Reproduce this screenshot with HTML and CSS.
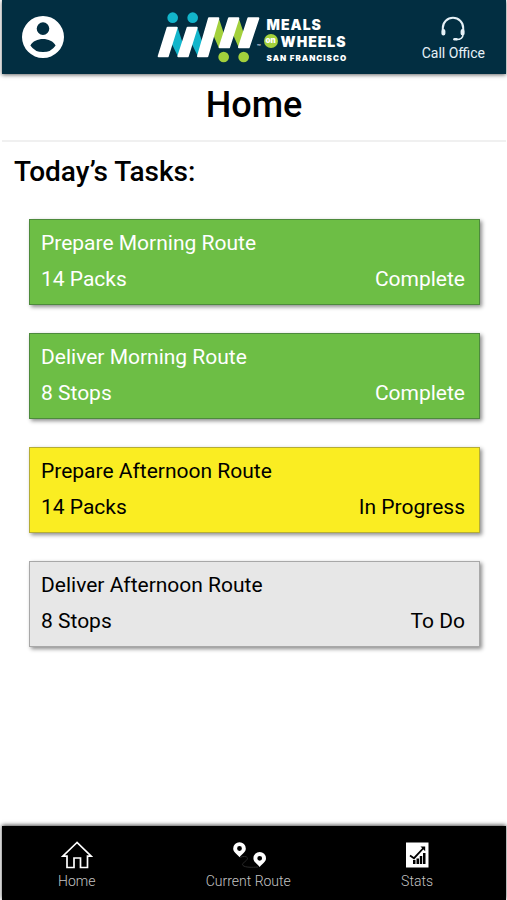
FILE: index.html
```html
<!DOCTYPE html>
<html lang="en">
<head>
<meta charset="utf-8">
<meta name="viewport" content="width=device-width, initial-scale=1">
<title>Home</title>
<link rel="stylesheet" href="styles.css">
</head>
<body>
<div class="app">
  <header class="topbar">
    <button class="profile" type="button" aria-label="Profile">
      <svg viewBox="2 2 20 20" width="42" height="42" aria-hidden="true"><path fill="#fff" d="M12 2a10 10 0 1 0 0 20 10 10 0 0 0 0-20zm0 3a3 3 0 1 1 0 6 3 3 0 0 1 0-6zm0 14.200a7.200 7.200 0 0 1-6-3.200c1-1.900 3.500-3 6-3s5 1.100 6 3a7.200 7.200 0 0 1-6 3.200z"/></svg>
    </button>
    <div class="brand">
      <svg viewBox="18 18 312 156" width="104" height="52" aria-hidden="true">
        <g fill="#12b5cb">
          <circle cx="65" cy="38" r="16"/><circle cx="125" cy="38" r="16"/>
          <path d="M79 65 97 120 82 157 60 112zM138 65 157 120 142 157 120 112z"/>
        </g>
        <g fill="#a2d03c">
          <circle cx="218" cy="156" r="16"/><circle cx="278" cy="156" r="16"/>
          <path d="M203 38 220 90 204 130 184 84zM263 38 280 90 264 130 244 84z"/>
        </g>
        <g fill="#fff" stroke="#fff" stroke-width="6" stroke-linejoin="round">
          <path d="M50 68H77L50 154H23zM110 68H137L110 154H82zM174 40H202L169 154H141zM234 40H262L234 127H206zM292 40H322L293 127H264z"/>
        </g>
      </svg>
      <span class="mark">™</span>
      <div class="wordmark">
        <span class="word">MEALS</span>
        <span class="word"><span class="on">on</span>WHEELS</span>
        <span class="city">SAN FRANCISCO</span>
      </div>
    </div>
    <button class="call" type="button">
      <svg viewBox="0 0 26 26" width="26" height="26" fill="none" stroke="#e6f1f7" stroke-linecap="round" aria-hidden="true">
        <path stroke-width="2" d="M2.800 14V12a10.200 10.200 0 0 1 20.400 0v2"/>
        <path stroke-width="4" d="M3.400 15v2.400M22.600 15v2.400"/>
        <path stroke-width="1.500" d="M23 18.500c0 3-2.500 5-6.500 5"/>
        <path stroke-width="2.600" d="M14.500 23.200h2"/>
      </svg>
      <span>Call Office</span>
    </button>
  </header>

  <main class="content">
    <h1 class="title">Home</h1>
    <section class="tasks">
      <h2 class="heading">Today’s Tasks:</h2>
      <ul class="list">
        <li class="card done"><span class="name">Prepare Morning Route</span><span class="detail"><span>14 Packs</span><span>Complete</span></span></li>
        <li class="card done"><span class="name">Deliver Morning Route</span><span class="detail"><span>8 Stops</span><span>Complete</span></span></li>
        <li class="card active"><span class="name">Prepare Afternoon Route</span><span class="detail"><span>14 Packs</span><span>In Progress</span></span></li>
        <li class="card todo"><span class="name">Deliver Afternoon Route</span><span class="detail"><span>8 Stops</span><span>To Do</span></span></li>
      </ul>
    </section>
  </main>

  <nav class="tabs">
    <a class="tab" href="#home">
      <svg viewBox="0 0 32 28" width="32" height="28" fill="none" stroke="#fff" stroke-width="1.700" aria-hidden="true"><path d="M16 1.500 1.800 15.200H6V26.500H13V17H19.500V26.500H26.500V15.200H30.200z"/></svg>
      <span>Home</span>
    </a>
    <a class="tab" href="#route">
      <svg viewBox="-2 0 36 28" width="36" height="28" aria-hidden="true">
        <path fill="none" stroke="#2a2a2a" stroke-width="1" d="M8 16.500c4-2 9-1 7 2s-6 4-4 6 9 2 15 1.500"/>
        <path fill="#fff" fill-rule="evenodd" d="M7.500 1.200a6.300 6.300 0 0 0-6.300 6.300c0 4 3.800 5.300 6.300 8.700 2.500-3.400 6.300-4.700 6.300-8.700a6.300 6.300 0 0 0-6.300-6.300zm0 3.900a2.400 2.400 0 1 1 0 4.800 2.400 2.400 0 0 1 0-4.800zM27.700 11a6.300 6.300 0 0 0-6.300 6.300c0 4 3.800 5.300 6.300 8.700 2.500-3.400 6.300-4.700 6.300-8.700a6.300 6.300 0 0 0-6.300-6.300zm0 3.900a2.400 2.400 0 1 1 0 4.800 2.400 2.400 0 0 1 0-4.800z"/>
      </svg>
      <span>Current Route</span>
    </a>
    <a class="tab" href="#stats">
      <svg viewBox="0 0 24 28" width="24" height="28" aria-hidden="true">
        <path fill="#fff" d="M1 1.500h22.500v25H1z"/>
        <path d="M8 19h2.500v4H8zM11.500 17.500H14V23h-2.500zM14.800 15h2.400v8h-2.400zM18 12h2.500v11H18z"/>
        <path fill="none" stroke="#000" stroke-width="1.800" d="M5 14.500 9 17.200 18.500 7"/>
        <path d="M15.500 5.500h4.700v4.700z"/>
      </svg>
      <span>Stats</span>
    </a>
  </nav>
</div>
</body>
</html>
```
FILE: styles.css
```css
* { box-sizing: border-box; }
body {
  margin: 0;
  background: #fff;
  color: #000;
  font-family: Roboto, "Liberation Sans", sans-serif;
}
button {
  margin: 0;
  padding: 0;
  border: 0;
  background: none;
  color: inherit;
  font: inherit;
  cursor: pointer;
}
svg { display: block; flex: none; }
.app {
  display: flex;
  flex-direction: column;
  min-height: 100vh;
  padding: 0 1px 0 2px;
}
.topbar {
  display: flex;
  align-items: center;
  justify-content: space-between;
  height: 74px;
  padding: 0 21px 0 20px;
  background: #022e41;
  color: #fff;
  box-shadow: 0 1px 4px rgba(0, 0, 0, 0.6);
}
.brand {
  display: flex;
  align-items: center;
  margin-left: 18px;
}
.mark {
  width: 10px;
  margin-top: 20px;
  margin-left: -4px;
  font-size: 7px;
  line-height: 8px;
}
.wordmark {
  display: flex;
  flex-direction: column;
  padding-top: 7px;
  font-family: Inter, "Liberation Sans", sans-serif;
  font-weight: 900;
}
.word {
  display: flex;
  align-items: center;
  font-size: 14px;
  line-height: 17px;
  letter-spacing: 1px;
}
.on {
  width: 14px;
  height: 14px;
  margin-left: -3px;
  margin-right: 3px;
  border-radius: 50%;
  background: #a2d03c;
  font-size: 8px;
  line-height: 13px;
  letter-spacing: 0;
  text-align: center;
}
.city {
  font-size: 8px;
  line-height: 16px;
  letter-spacing: 1px;
  white-space: nowrap;
}
.call {
  display: flex;
  flex-direction: column;
  align-items: center;
  gap: 2px;
  padding-top: 3px;
  color: #e6f1f7;
  font-size: 14px;
  line-height: 18px;
}
.content { flex: 1; }
.title {
  margin: 0;
  padding: 10px 0 14px;
  border-bottom: 2px solid #f0f0f0;
  font-size: 36px;
  line-height: 42px;
  font-weight: 500;
  text-align: center;
}
.tasks { padding: 12px 26px 24px 12px; }
.heading {
  margin: 0;
  font-size: 28px;
  line-height: 35px;
  font-weight: 500;
}
.list {
  display: flex;
  flex-direction: column;
  gap: 28px;
  margin: 30px 0 0;
  padding: 0 0 0 15px;
  list-style: none;
}
.card {
  display: flex;
  flex-direction: column;
  gap: 10px;
  padding: 10px 14px 12px 11px;
  border: 1px solid;
  box-shadow: 2px 2px 4px rgba(0, 0, 0, 0.45);
  font-size: 21px;
  line-height: 26px;
}
.detail {
  display: flex;
  justify-content: space-between;
}
.done { background: #6dbe45; border-color: #4d8a3c; color: #fff; }
.active { background: #faed22; border-color: #b5ad35; }
.todo { background: #e7e7e7; border-color: #a8a8a8; }
.tabs {
  display: flex;
  justify-content: space-between;
  height: 74px;
  padding: 15px 73px 0 56px;
  background: #000;
  box-shadow: 0 -1px 4px rgba(0, 0, 0, 0.7);
}
.tab {
  display: flex;
  flex-direction: column;
  align-items: center;
  gap: 3px;
  color: #c4c4c4;
  font-size: 14px;
  line-height: 18px;
  font-weight: 300;
  text-decoration: none;
}
```
